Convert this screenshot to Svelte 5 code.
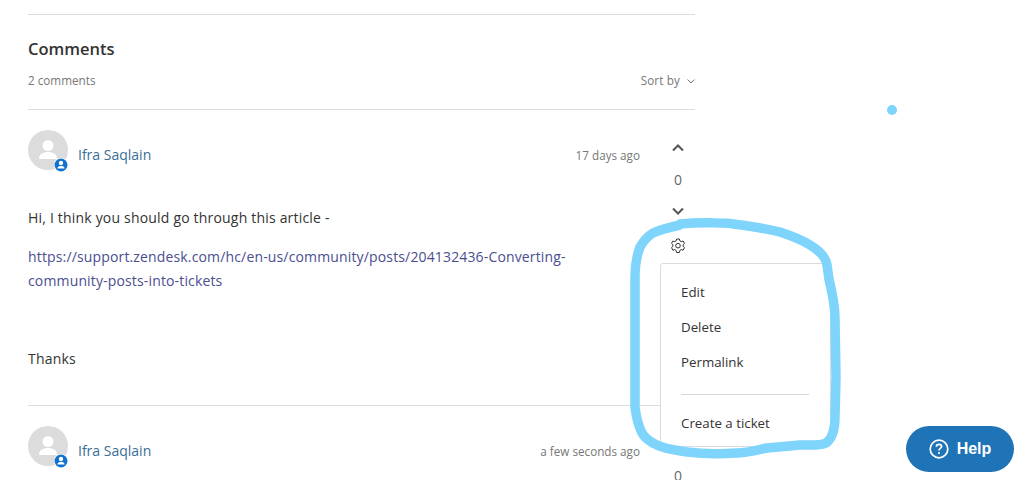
<script lang="ts">
	const comments = [
		{ author: 'Ifra Saqlain', when: '17 days ago', votes: 0, open: true },
		{ author: 'Ifra Saqlain', when: 'a few seconds ago', votes: 0, open: false },
	];
	const menu = ['Edit', 'Delete', 'Permalink'];
	const scribble =
		'M680 224 C700 222 733 223 733 224 C750 226 768 229 780 232 C792 236 802 240 810 245 C820 251 826 258 827 265 C828 275 830 285 832 293 C834 303 835 312 835 320 L836 377 L835 417 C835 428 833 438 826 443 C820 446 810 445 800 445 C790 446 778 447 767 448 C757 450 747 453 737 453 C720 454 703 454 687 452 C675 450 665 449 657 445 C650 442 645 438 642 433 C638 425 636 416 635 407 L635 277 C635 266 637 255 640 247 C644 240 648 236 653 233 C662 229 671 227 680 225';
</script>

<div class="page">
	<section class="comments">
		<header class="comments-head">
			<h2>Comments</h2>
			<div class="meta">
				<span>2 comments</span>
				<span class="sort">Sort by
					<svg width="8" height="8" viewBox="0 0 8 8"><path d="M0.5 2.5 4 6 7.5 2.5" fill="none" stroke="currentColor" /></svg>
				</span>
			</div>
		</header>

		{#each comments as c}
			<article class="comment">
				<div class="main">
					<div class="byline">
						<div class="avatar">
							<svg width="40" height="40" viewBox="0 0 40 40">
								<circle cx="20" cy="20" r="20" fill="#dcdcdc" />
								<circle cx="20" cy="15.5" r="5.5" fill="#fff" />
								<path d="M11 29 C11 24 15 22 20 22 C25 22 29 24 29 29 Z" fill="#fff" />
							</svg>
							<svg class="badge" width="14" height="14" viewBox="0 0 14 14">
								<circle cx="7" cy="7" r="6.5" fill="#1072cf" />
								<circle cx="7" cy="5" r="2.2" fill="#fff" />
								<path d="M3.4 10.5 C3.6 8.6 5 8 7 8 C9 8 10.4 8.6 10.6 10.5 Z" fill="#fff" />
							</svg>
						</div>
						<a class="author" href="#top">{c.author}</a>
						<span class="when">{c.when}</span>
					</div>
					{#if c.open}
						<div class="body">
							<p>Hi, I think you should go through this article -</p>
							<p class="link"><a href="#top">https://support.zendesk.com/hc/en-us/community/posts/204132436-Converting-community-posts-into-tickets</a></p>
							<p class="thanks">Thanks</p>
						</div>
					{/if}
				</div>
				<div class="actions">
					<svg class="arrow" width="12" height="8" viewBox="0 0 12 8"><path d="M1 6.5 6 1.5 11 6.5" /></svg>
					<span class="count">{c.votes}</span>
					<svg class="arrow" width="12" height="8" viewBox="0 0 12 8"><path d="M1 1.5 6 6.5 11 1.5" /></svg>
					{#if c.open}
						<div class="gear-wrap">
							<svg class="gear" width="16" height="16" viewBox="0 0 16 16">
								<path d="M6.6 1 H9.4 L9.9 2.9 L11.3 3.6 L13.1 3 L14.5 5.4 L13.1 6.7 V8.3 L14.5 9.6 L13.1 12.2 L11.3 11.6 L9.9 12.4 L9.4 14.5 H6.6 L6.1 12.4 L4.7 11.6 L2.9 12.2 L1.5 9.6 L2.9 8.3 V6.7 L1.5 5.4 L2.9 3 L4.7 3.6 L6.1 2.9 Z" />
								<circle cx="8" cy="7.7" r="2.3" />
							</svg>
							<div class="menu">
								<ul>
									{#each menu as item}
										<li>{item}</li>
									{/each}
								</ul>
								<hr />
								<ul>
									<li>Create a ticket</li>
								</ul>
							</div>
						</div>
					{/if}
				</div>
			</article>
		{/each}
	</section>

	<span class="dot"></span>
	<svg class="scribble" width="1032" height="480" viewBox="0 0 1032 480"><path d={scribble} /></svg>

	<button class="help">
		<svg width="20" height="20" viewBox="0 0 20 20">
			<circle cx="10" cy="10" r="8.8" fill="none" stroke="#fff" stroke-width="1.7" />
			<path d="M7.4 7.8 C7.4 6.2 8.6 5.4 10 5.4 C11.5 5.4 12.6 6.3 12.6 7.6 C12.6 9.4 10 9.4 10 11.4" fill="none" stroke="#fff" stroke-width="1.7" />
			<circle cx="10" cy="14" r="1.1" fill="#fff" />
		</svg>
		Help
	</button>
</div>

<style>
	:global(body) {
		margin: 0;
		background: #fff;
	}

	.page {
		position: relative;
		height: 480px;
		overflow: hidden;
		font-family: 'Open Sans', 'Noto Sans', sans-serif;
		font-size: 14px;
		color: #333;
	}

	.comments {
		width: 667px;
		margin: 14px 0 0 28px;
		border-top: 1px solid #ddd;
	}

	.comments-head {
		height: 94px;
		border-bottom: 1px solid #ddd;
	}

	h2 {
		margin: 0;
		padding-top: 23px;
		font-size: 16.5px;
		line-height: 22px;
		font-weight: 600;
		color: #333;
	}

	.meta {
		display: flex;
		justify-content: space-between;
		margin-top: 11px;
		font-size: 11.7px;
		line-height: 18px;
		color: #777;
	}

	.sort {
		letter-spacing: 0.1px;
	}

	.sort svg {
		margin-left: 4px;
	}

	/* --- Comment --- */

	.comment {
		display: flex;
		height: 275px;
		padding-top: 20px;
		border-bottom: 1px solid #ddd;
	}

	.main {
		flex: 1;
		padding-right: 21px;
	}

	.byline {
		display: flex;
		align-items: center;
		height: 40px;
		gap: 10px;
	}

	.avatar {
		position: relative;
		width: 40px;
		height: 40px;
	}

	.avatar svg {
		display: block;
	}

	.badge {
		position: absolute;
		right: 0;
		bottom: -2px;
		background: #fff;
		border-radius: 50%;
	}

	.author {
		padding-top: 9px;
		color: #3a6d96;
		text-decoration: none;
	}

	.when {
		margin-left: auto;
		padding-top: 10px;
		font-size: 11.7px;
		color: #777;
	}

	.body {
		margin-top: 36px;
		line-height: 24px;
		letter-spacing: 0.19px;
	}

	.body p {
		margin: 0;
	}

	.body .link {
		max-width: 560px;
		margin-top: 15px;
		letter-spacing: 0.15px;
	}

	.link a {
		color: #4a4e8f;
		text-decoration: none;
	}

	.body .thanks {
		margin-top: 54px;
	}

	.actions {
		display: flex;
		flex-direction: column;
		align-items: center;
		width: 34px;
		padding-top: 14px;
	}

	.arrow path {
		fill: none;
		stroke: #555;
		stroke-width: 2;
	}

	.arrow {
		display: block;
	}

	.count {
		margin: 18px 0 17px;
		font-size: 14px;
		line-height: 20px;
		color: #666;
	}

	.gear-wrap {
		position: relative;
		margin-top: 23px;
		height: 16px;
	}

	.gear {
		display: block;
		fill: none;
		stroke: #333;
		stroke-width: 1;
		stroke-linejoin: round;
	}

	.menu {
		position: absolute;
		top: 25px;
		left: -10px;
		width: 171px;
		height: 184px;
		background: #fff;
		border: 1px solid #d8dcde;
		border-radius: 3px;
		padding: 11px 21px 11px 20px;
		box-sizing: border-box;
		font-size: 13.3px;
	}

	.menu ul {
		list-style: none;
		margin: 0;
		padding: 0;
	}

	.menu li {
		height: 35px;
		line-height: 35px;
		white-space: nowrap;
	}

	.menu hr {
		margin: 14px 0 11px;
		border: 0;
		border-top: 1px solid #d8d8d8;
	}

	/* --- Overlays --- */

	.dot {
		position: absolute;
		left: 887px;
		top: 105px;
		width: 10px;
		height: 10px;
		border-radius: 50%;
		background: #7fd4fc;
	}

	.scribble {
		position: absolute;
		inset: 0;
		pointer-events: none;
	}

	.scribble path {
		fill: none;
		stroke: #7fd4fc;
		stroke-width: 9.5;
		stroke-linecap: round;
		stroke-linejoin: round;
	}

	.help {
		position: absolute;
		left: 906px;
		top: 426px;
		width: 108px;
		height: 46px;
		display: flex;
		align-items: center;
		justify-content: center;
		gap: 8px;
		border: 0;
		border-radius: 23px;
		background: #1f73b7;
		color: #fff;
		font-family: 'Liberation Sans', sans-serif;
		font-size: 16px;
		font-weight: 700;
	}
</style>
